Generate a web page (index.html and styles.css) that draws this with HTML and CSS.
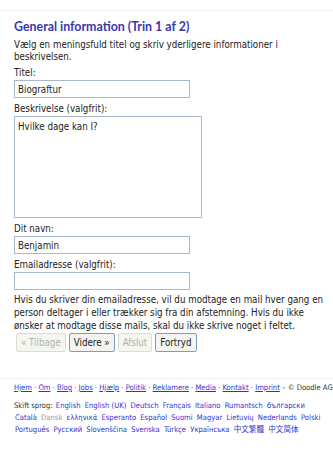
FILE: index.html
```html
<!DOCTYPE html>
<html lang="da">
<head>
    <meta charset="UTF-8">
    <title>Doodle - General information</title>
    <link rel="stylesheet" href="styles.css">
</head>
<body>
    <div class="top"></div>
    <div class="content">
        <h1>General information (Trin 1 af 2)</h1>
        <p class="intro">Vælg en meningsfuld titel og skriv yderligere informationer i beskrivelsen.</p>

        <label>Titel:</label>
        <input class="field" type="text" value="Biograftur">

        <label>Beskrivelse (valgfrit):</label>
        <textarea class="field area">Hvilke dage kan I?</textarea>

        <label>Dit navn:</label>
        <input class="field" type="text" value="Benjamin">

        <label>Emailadresse (valgfrit):</label>
        <input class="field" type="text" value="">
        <p class="note">Hvis du skriver din emailadresse, vil du modtage en mail hver gang en person deltager i eller trækker sig fra din afstemning. Hvis du ikke ønsker at modtage disse mails, skal du ikke skrive noget i feltet.</p>

        <div class="buttons">
            <button class="btn" disabled>« Tilbage</button>
            <button class="btn">Videre »</button>
            <button class="btn" disabled>Afslut</button>
            <button class="btn">Fortryd</button>
        </div>
    </div>

    <div class="footer">
        <div class="links">
            <a href="#">Hjem</a> · <a href="#">Om</a> · <a href="#">Blog</a> · <a href="#">Jobs</a> · <a href="#">Hjælp</a> · <a href="#">Politik</a> · <a href="#">Reklamere</a> · <a href="#">Media</a> · <a href="#">Kontakt</a> · <a href="#">Imprint</a> – © Doodle AG
        </div>
        <div class="langs">
            Skift sprog:
            <a href="#">English</a>
            <a href="#">English (UK)</a>
            <a href="#">Deutsch</a>
            <a href="#">Français</a>
            <a href="#">Italiano</a>
            <a href="#">Rumantsch</a>
            <a href="#">български</a>
            <a href="#">Català</a>
            <span class="current">Dansk</span>
            <a href="#">ελληνικά</a>
            <a href="#">Esperanto</a>
            <a href="#">Español</a>
            <a href="#">Suomi</a>
            <a href="#">Magyar</a>
            <a href="#">Lietuvių</a>
            <a href="#">Nederlands</a>
            <a href="#">Polski</a>
            <a href="#">Português</a>
            <a href="#">Русский</a>
            <a href="#">Slovenščina</a>
            <a href="#">Svenska</a>
            <a href="#">Türkçe</a>
            <a href="#">Українська</a>
            <a href="#">中文繁體</a>
            <a href="#">中文简体</a>
        </div>
    </div>
</body>
</html>
```

FILE: styles.css
```css
body {
    margin: 0;
    background: white;
    font-family: "DejaVu Sans Condensed", "Liberation Sans", "Noto Sans CJK TC", sans-serif;
    font-size: 9.7px;
    color: #222;
}

.top {
    height: 10px;
    border-bottom: 1px solid #eeeeee;
}

.content {
    padding: 7px 4px 0 14px;
    display: flex;
    flex-direction: column;
    align-items: flex-start;
}

h1 {
    margin: 0 0 4px 0;
    font-family: Lato, "DejaVu Sans Condensed", sans-serif;
    font-size: 12.4px;
    line-height: 17px;
    color: #3838ae;
}

p {
    margin: 0;
}

.intro {
    line-height: 12px;
    margin-bottom: 4px;
}

label {
    line-height: 12px;
}

.field {
    box-sizing: border-box;
    width: 176px;
    height: 18px;
    margin: 1px 0 5px 0;
    padding: 1px 3px;
    border: 1px solid #a5b9d3;
    font-family: inherit;
    font-size: 9.7px;
    color: #222;
}

.area {
    width: 188px;
    height: 102px;
    padding: 4px 3px;
    resize: none;
}

.note {
    margin-top: -2px;
    line-height: 13px;
}

.buttons {
    display: flex;
    gap: 3px;
    margin: 1px 0 0 2px;
}

.btn {
    height: 19px;
    padding: 0 4px;
    font-family: inherit;
    font-size: 9.7px;
    color: #222;
    background: #f4f4f0;
    border: 1px solid #7f9db9;
    border-radius: 2px;
}

.btn:disabled {
    color: #b0b0a8;
    border-color: #dcdcd4;
    background: #f6f6f0;
}

.footer {
    margin-top: 26px;
    border-top: 1px solid #eeeeee;
    padding: 3px 4px 0 14px;
    font-size: 7.6px;
    color: #333;
}

.footer a {
    color: #3333cc;
}

.links {
    line-height: 12px;
    white-space: nowrap;
}

.langs {
    margin-top: 6px;
    line-height: 12px;
}

.langs a,
.langs .current {
    padding: 0 1px;
    text-decoration: none;
}

.current {
    color: #999;
}
```
